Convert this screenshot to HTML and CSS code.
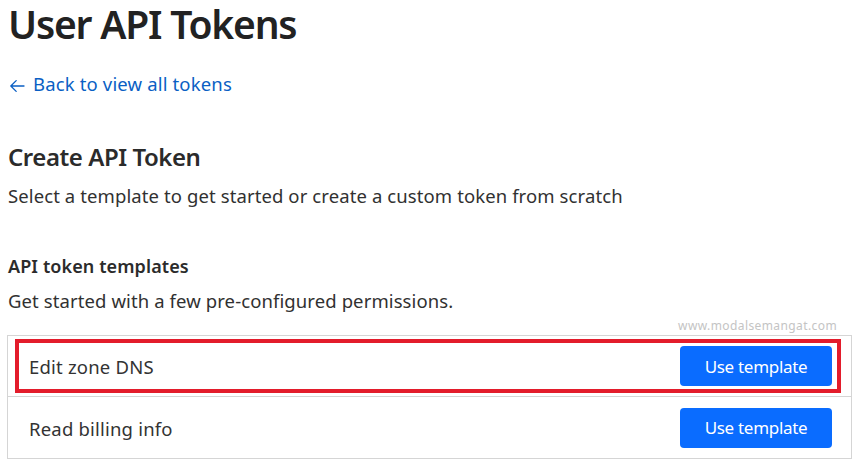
FILE: index.html
```html
<!DOCTYPE html>
<html lang="en">
<head>
<meta charset="utf-8">
<title>User API Tokens</title>
<link rel="stylesheet" href="styles.css">
</head>
<body>
<main class="page">
  <h1 class="title">User API Tokens</h1>
  <a class="back" href="#"><svg class="back-icon" viewBox="0 0 16 16" width="16" height="16" aria-hidden="true"><path d="M15 8H1.8M7.2 2.6L1.8 8l5.4 5.4" fill="none" stroke="currentColor" stroke-width="1.3" stroke-linecap="round" stroke-linejoin="round"/></svg><span>Back to view all tokens</span></a>
  <section class="create">
    <h2 class="create-title">Create API Token</h2>
    <p class="create-desc">Select a template to get started or create a custom token from scratch</p>
  </section>
  <section class="templates">
    <h3 class="templates-title">API token templates</h3>
    <p class="templates-desc">Get started with a few pre-configured permissions.</p>
    <div class="table-wrap">
      <span class="watermark">www.modalsemangat.com</span>
      <div class="table">
        <div class="row">
          <div class="row-inner highlight">
            <span class="row-name">Edit zone DNS</span>
            <button class="btn">Use template</button>
          </div>
        </div>
        <div class="row">
          <div class="row-inner">
            <span class="row-name">Read billing info</span>
            <button class="btn">Use template</button>
          </div>
        </div>
      </div>
    </div>
  </section>
</main>
</body>
</html>
```

FILE: styles.css
```css
* { box-sizing: border-box; }
html, body { margin: 0; padding: 0; background: #fff; }
body {
  font-family: "Noto Sans", "Open Sans", sans-serif;
  color: #313131;
  overflow: hidden;
}
.page {
  padding: 0 14px 0 7px;
  height: 463px;
}
.title {
  margin: 0;
  padding-left: 1px;
  font-size: 39px;
  line-height: 48px;
  font-weight: 600;
  color: #222;
  letter-spacing: -1.2px;
}
.back {
  display: flex;
  align-items: center;
  gap: 8px;
  margin-top: 24px;
  padding-left: 2px;
  height: 24px;
  font-size: 18.5px;
  line-height: 24px;
  color: #0a5fc4;
  text-decoration: none;
  letter-spacing: 0.15px;
}
.back-icon { width: 16px; height: 16px; margin-top: 3px; }
.create { margin-top: 45px; padding-left: 1px; }
.create-title {
  margin: 0;
  font-size: 24px;
  line-height: 32px;
  font-weight: 600;
  color: #2b2b2b;
  letter-spacing: -0.45px;
}
.create-desc {
  margin: 11px 0 0;
  font-size: 18.5px;
  line-height: 24px;
  letter-spacing: 0.1px;
}
.templates { margin-top: 46px; }
.templates-title {
  margin: 0;
  padding-left: 1px;
  font-size: 18px;
  line-height: 24px;
  font-weight: 600;
  color: #2b2b2b;
  letter-spacing: 0.1px;
}
.templates-desc {
  margin: 11px 0 0;
  padding-left: 1px;
  font-size: 18.5px;
  line-height: 24px;
  letter-spacing: 0.1px;
}
.table-wrap { position: relative; margin-top: 22px; }
.watermark {
  position: absolute;
  right: 15px;
  top: -17px;
  font-size: 12px;
  line-height: 15px;
  color: #c4c4c4;
  letter-spacing: 0.4px;
}
.table {
  border: 1px solid #d5d5d5;
  border-bottom: none;
}
.row {
  border-bottom: 1px solid #d5d5d5;
  padding: 3px 10px 3px 7px;
  height: 62px;
}
.row:first-child { height: 61px; }
.row-inner {
  display: flex;
  align-items: center;
  justify-content: space-between;
  height: 100%;
  padding: 0 9px 0 14px;
}
.highlight {
  border: 4px solid #e31c2b;
  padding: 0 5px 0 10px;
}
.row-name {
  padding-top: 2px;
  font-size: 18.5px;
  line-height: 24px;
  letter-spacing: 0.2px;
  color: #333;
}
.btn {
  font-family: inherit;
  width: 152px;
  height: 40px;
  border: none;
  border-radius: 4px;
  background: #0a6cff;
  color: #fff;
  font-size: 17px;
  letter-spacing: -0.3px;
  cursor: pointer;
  padding: 0;
}
```
